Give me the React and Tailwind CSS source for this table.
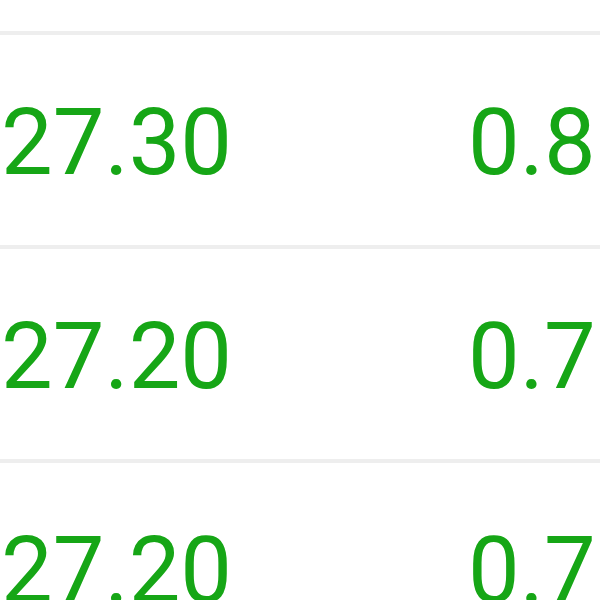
export default function App() {
  const rows = [
    ["27.30", "0.8"],
    ["27.20", "0.7"],
    ["27.20", "0.7"],
  ];
  return (
    <div
      className="w-[600px] h-[600px] overflow-hidden bg-white pt-[31px]"
      style={{ fontFamily: "Roboto, 'Noto Sans', sans-serif" }}
    >
      {rows.map((r, i) => (
        <div key={i}>
          <div className="h-[4px] bg-[#eeeeee]" />
          <div className="h-[210px] pt-[6px] flex items-center text-[92px] leading-none text-[#16a616] font-normal">
            <div className="w-[467px] ml-[1px]">{r[0]}</div>
            <div className="whitespace-nowrap">{r[1]}</div>
          </div>
        </div>
      ))}
    </div>
  );
}
